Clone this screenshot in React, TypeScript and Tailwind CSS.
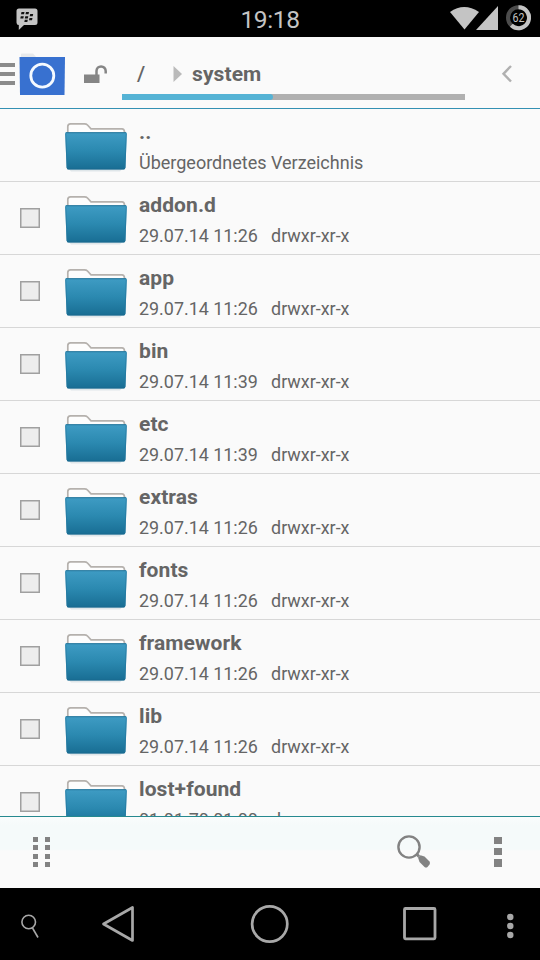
type Entry = { name: string; info: string; parent?: boolean };

const entries: Entry[] = [
  { name: '..', info: 'Übergeordnetes Verzeichnis', parent: true },
  { name: 'addon.d', info: '29.07.14 11:26   drwxr-xr-x' },
  { name: 'app', info: '29.07.14 11:26   drwxr-xr-x' },
  { name: 'bin', info: '29.07.14 11:39   drwxr-xr-x' },
  { name: 'etc', info: '29.07.14 11:39   drwxr-xr-x' },
  { name: 'extras', info: '29.07.14 11:26   drwxr-xr-x' },
  { name: 'fonts', info: '29.07.14 11:26   drwxr-xr-x' },
  { name: 'framework', info: '29.07.14 11:26   drwxr-xr-x' },
  { name: 'lib', info: '29.07.14 11:26   drwxr-xr-x' },
  { name: 'lost+found', info: '01.01.70 01:00   d' },
];

function FolderIcon() {
  return (
    <svg width="66" height="54" viewBox="0 0 66 54" className="block shrink-0">
      <defs>
        <linearGradient id="folder" x1="0" y1="0" x2="0" y2="1">
          <stop offset="0" stopColor="#3f9cc4" />
          <stop offset="0.5" stopColor="#2b89b0" />
          <stop offset="1" stopColor="#186d93" />
        </linearGradient>
      </defs>
      <path d="M5 48H60L57 51.5H8Z" fill="#dfe6e9" />
      <path
        d="M4.800 14V6.500Q4.800 3.800 7.500 3.800H21.500Q23.300 3.800 24.500 5L28 8.800H59Q61.300 8.800 61.500 12V14Z"
        fill="#fdfdfd"
        stroke="#b5b1ad"
        strokeWidth="1.700"
      />
      <path
        d="M3 12.200H62.500Q63.900 12.200 63.800 13.500L62.500 47.500Q62.400 49.500 60.500 49.500H5.500Q3.700 49.500 3.600 47.500L2.200 13.500Q2.100 12.200 3 12.200Z"
        fill="url(#folder)"
      />
      <path d="M3 12.700H63M4.300 48.900H61.500" stroke="#1c6c91" strokeWidth="1" opacity="0.800" />
      <path d="M2.700 13.500L4.100 48M63.300 13.500L61.900 48" stroke="#2478a0" strokeWidth="1" opacity="0.700" />
    </svg>
  );
}

function StatusBar() {
  return (
    <div className="grid h-[37px] grid-cols-3 items-center bg-black">
      <svg width="24" height="24" viewBox="0 0 24 24" className="mt-px ml-[15px]" fill="#c4c4c4">
        <path d="M4 1.500H20Q22.500 1.500 22.500 4V15.500Q22.500 18 20 18H9L3.800 23V18Q1.500 18 1.500 15.500V4Q1.500 1.500 4 1.500Z" />
        <g fill="#111">
          <path d="M6.500 5h3l-.5 2.200H6zM11 5h3l-.5 2.200h-3zM5.800 9.200h3l-.5 2.200h-3zM10.300 9.200h3l-.5 2.200h-3zM15.200 7h3l-.5 2.200h-3zM14.500 11h3l-.5 2.200h-3zM9.800 12.800h3l-.5 2.200h-3z" />
        </g>
      </svg>
      <div className="pt-[2px] text-center text-[24.500px] leading-[30px] tracking-[-0.400px] text-[#c4c4c4]">19:18</div>
      <svg width="90" height="37" viewBox="0 0 90 37" className="justify-self-end">
        <path d="M0 12Q14 2 29 12L14.500 29.500Z" fill="#c4c4c4" />
        <path d="M26 30L48 6V30Z" fill="#c4c4c4" />
        <circle cx="68.500" cy="17.700" r="10.500" fill="none" stroke="#4c4c4c" strokeWidth="4" />
        <path d="M68.500 7.200A10.500 10.500 0 1 1 61.300 25.300" fill="none" stroke="#c4c4c4" strokeWidth="4" />
        <text x="68.500" y="22" textAnchor="middle" fontSize="12.500" textLength="12" lengthAdjust="spacingAndGlyphs" fill="#c4c4c4">62</text>
      </svg>
    </div>
  );
}

function Header() {
  return (
    <header className="flex h-[72px] shrink-0 border-b border-[#3390b3] bg-[#fafafa]">
      <svg width="122" height="71" viewBox="0 0 122 71" className="shrink-0">
        <path d="M0 28H15M0 37H15M0 46H15" stroke="#8b8b8b" strokeWidth="3.800" />
        <path d="M21 21V17.500Q21 16.500 22 16.500H33L36 20H63V24H21Z" fill="#e7e9eb" />
        <path d="M19.500 20H65L64.500 58H20Z" fill="#3871d0" />
        <circle cx="42.300" cy="38.700" r="11.500" fill="none" stroke="#f5faff" strokeWidth="2.800" />
        <path d="M84 37.500H99.500V46H84Z" fill="#858585" />
        <path d="M96.500 38V34A4.600 4.600 0 0 1 105.700 34V36.500" fill="none" stroke="#858585" strokeWidth="2.500" />
      </svg>
      <div className="flex w-[343px] shrink-0 flex-col">
        <div className="flex h-[57px] items-center pt-[17px] text-[21px] leading-6 font-bold text-[#656565]">
          <span className="ml-[15px] w-[35px] font-medium">/</span>
          <svg width="11" height="18" viewBox="0 0 11 18">
            <path d="M1.500 1L10 9L1.500 17Z" fill="#bababa" />
          </svg>
          <span className="ml-[9px] tracking-[0.100px]">system</span>
        </div>
        <div className="flex h-[6px] bg-[#b0b0b0]">
          <div className="w-[151px] rounded-r-sm bg-[#55b3d5]" />
        </div>
      </div>
      <svg width="75" height="71" viewBox="0 0 75 71">
        <path d="M46 29L38.500 36.800L46 44.500" fill="none" stroke="#b0b0b0" strokeWidth="2.400" />
      </svg>
    </header>
  );
}

function Row({ entry }: { entry: Entry }) {
  return (
    <li className="flex h-[73px] shrink-0 border-b border-[#d7d7d7]">
      <div className="w-[63px] shrink-0 pt-[26px] pl-5">
        {!entry.parent && (
          <svg width="20" height="20" viewBox="0 0 20 20">
            <rect x="0.750" y="0.750" width="18.500" height="18.500" fill="#ededed" stroke="#a0a0a0" strokeWidth="1.500" />
          </svg>
        )}
      </div>
      <div className="pt-[11px]">
        <FolderIcon />
      </div>
      <div className="ml-[10px] text-[#656565]">
        <div className="mt-[11px] text-[21px] leading-6 font-bold tracking-[0.080px]">{entry.name}</div>
        <div className={`mt-[8px] leading-[22px] whitespace-pre ${entry.parent ? 'text-[18px]' : 'text-[17.900px]'}`}>
          {entry.info}
        </div>
      </div>
    </li>
  );
}

function Toolbar() {
  return (
    <div className="flex h-[72px] shrink-0 items-start justify-between border-t border-[#26898f] bg-[linear-gradient(#fafcfc_0px,#f5fafa_8px,#f5fafa_32px,#fafafa_34px)]">
      <svg width="60" height="71" viewBox="0 0 60 71" fill="#828282">
        <path d="M33 20h5v5h-5zM45 20h5v5h-5zM33 28h5v5h-5zM45 28h5v5h-5zM33 37h5v5h-5zM45 37h5v5h-5zM33 45h5v5h-5zM45 45h5v5h-5z" />
      </svg>
      <svg width="160" height="71" viewBox="0 0 160 71" fill="#828282">
        <circle cx="29" cy="30" r="10.600" fill="none" stroke="#828282" strokeWidth="2.400" />
        <path d="M36.500 37L39 39.500" stroke="#828282" strokeWidth="3" />
        <path d="M38 40.500L40.500 38.200L44.500 39.500L49.500 44.500Q50.500 46 49.500 47.500L47.500 50Q46 51.200 44.500 50L39.500 45Z" />
        <path d="M114 20h8v7h-8zM114 31h8v7h-8zM114 42h8v8h-8z" />
      </svg>
    </div>
  );
}

function NavBar() {
  return (
    <nav className="h-[72px] shrink-0 bg-black">
      <svg width="540" height="72" viewBox="0 0 540 72" fill="none" stroke="#a8a8a8">
        <circle cx="28.700" cy="34" r="6.800" strokeWidth="1.600" />
        <path d="M32.500 40L38 49.500" strokeWidth="1.600" />
        <path d="M132.500 19.500V52.500L103.500 36Z" strokeWidth="2.700" strokeLinejoin="round" />
        <circle cx="269.700" cy="36" r="17.600" strokeWidth="2.700" />
        <rect x="404.500" y="20.500" width="30.500" height="30.300" rx="1" strokeWidth="2.800" />
        <g fill="#a8a8a8" stroke="none">
          <circle cx="510.300" cy="29" r="3.200" />
          <circle cx="510.300" cy="38" r="3.200" />
          <circle cx="510.300" cy="47" r="3.200" />
        </g>
      </svg>
    </nav>
  );
}

export default function App() {
  return (
    <div className="flex h-[960px] w-[540px] flex-col overflow-hidden bg-[#fafafa] font-[Roboto,sans-serif]">
      <StatusBar />
      <Header />
      <ul className="flex h-[707px] shrink-0 flex-col overflow-hidden">
        {entries.map((entry) => (
          <Row key={entry.name} entry={entry} />
        ))}
      </ul>
      <Toolbar />
      <NavBar />
    </div>
  );
}
